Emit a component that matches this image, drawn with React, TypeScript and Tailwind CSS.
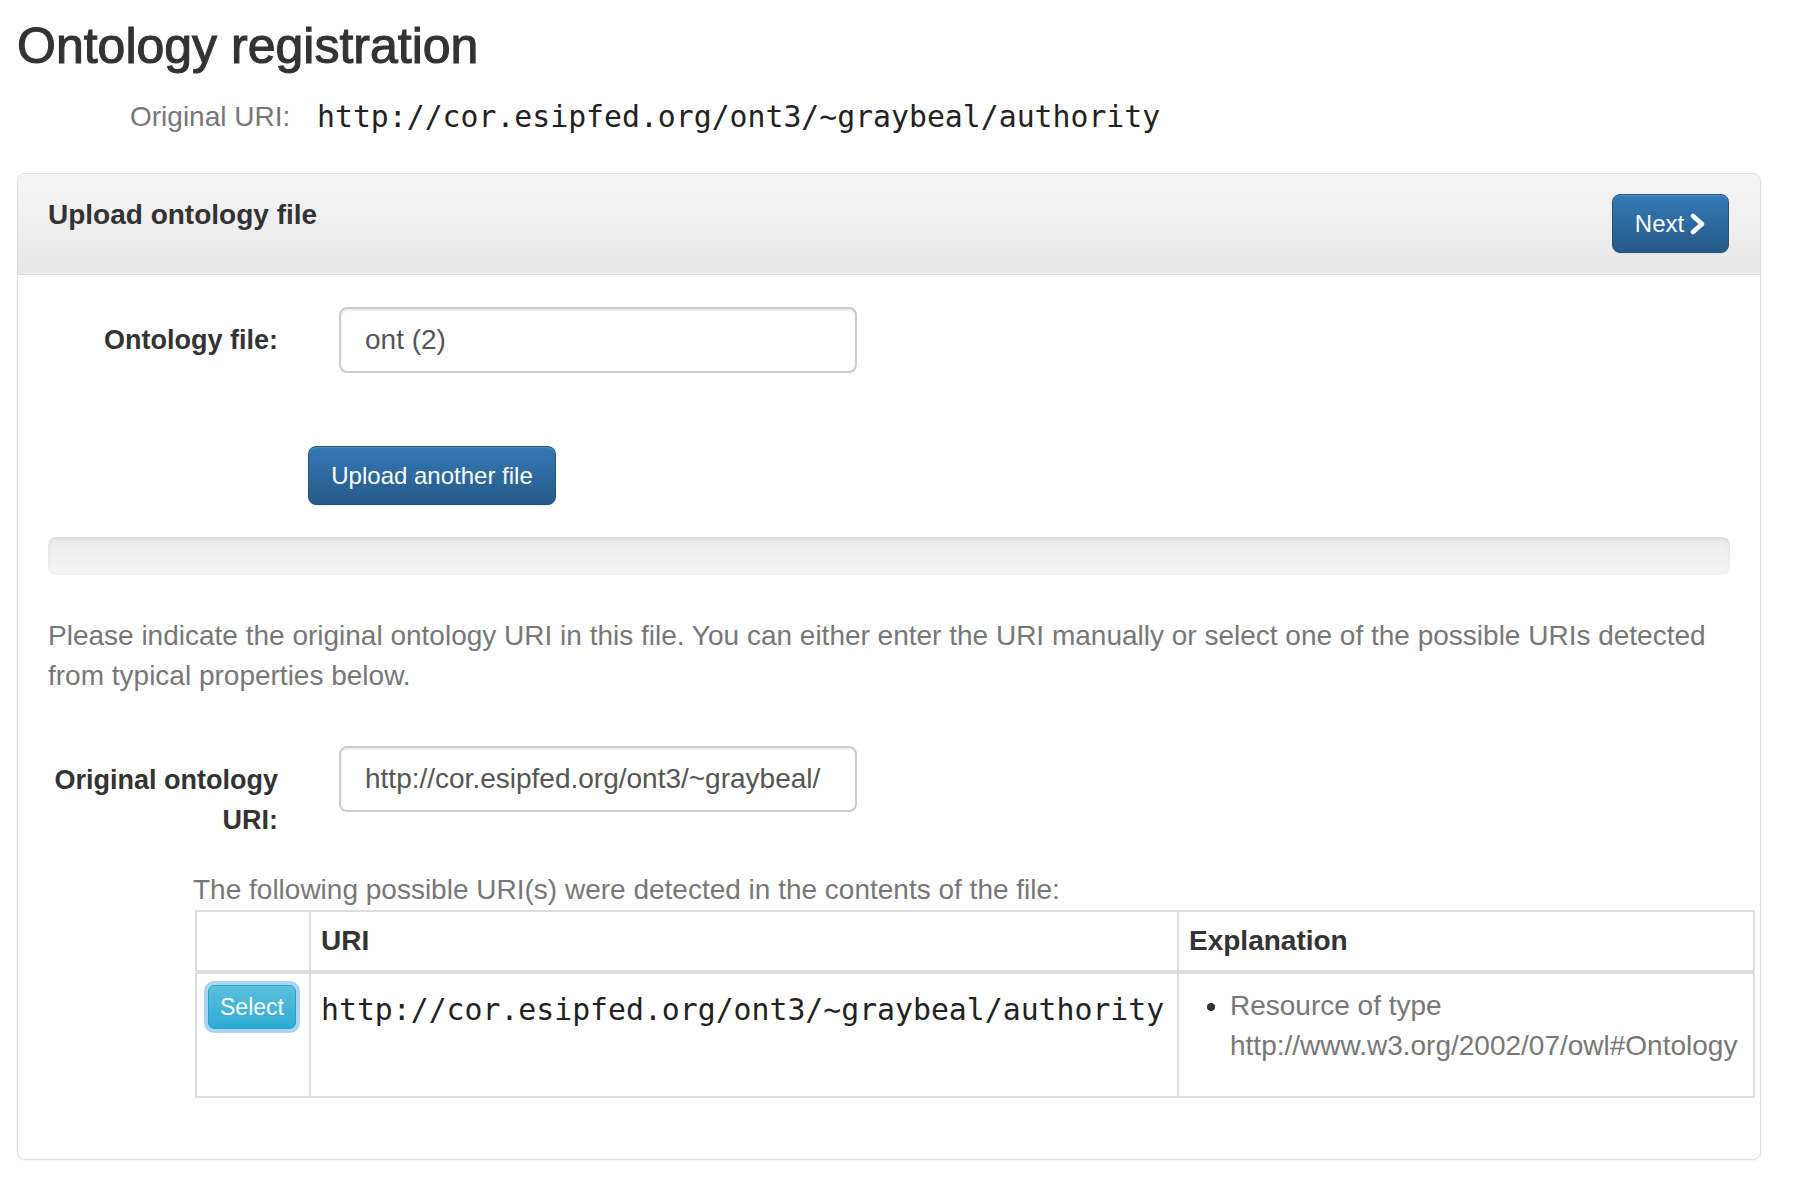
import React from "react";

export default function App() {
  return (
    <div className="w-[1794px] h-[1188px] bg-white text-[#333] font-['Liberation_Sans',Arial,sans-serif]">
      <h1 className="pl-[17px] pt-[19px] text-[50px] leading-[55px] font-normal text-[#333] [-webkit-text-stroke:1.1px_#333]">
        Ontology registration
      </h1>
      <div className="mt-[23px] flex items-center pl-[130px] h-[40px]">
        <span className="w-[187px] text-[28px] leading-[40px] text-[#777]">Original URI:</span>
        <span className="font-['DejaVu_Sans_Mono',monospace] text-[29.8px] leading-[40px] text-[#222]">
          http://cor.esipfed.org/ont3/~graybeal/authority
        </span>
      </div>

      <div className="mt-[36px] ml-[17px] w-[1744px] border border-[#ddd] rounded-[8px] shadow-[0_1px_2px_rgba(0,0,0,0.05)]">
        <div className="h-[101px] border-b border-[#ddd] rounded-t-[7px] bg-gradient-to-b from-[#f5f5f5] to-[#e8e8e8] pl-[30px] pr-[31px] flex justify-between items-start">
          <div className="pt-[21px] text-[28px] leading-[40px] font-bold text-[#333]">Upload ontology file</div>
          <button className="mt-[20px] w-[117px] h-[59px] rounded-[8px] border border-[#245580] bg-gradient-to-b from-[#337ab7] to-[#265a88] text-white text-[24px] flex items-center justify-center gap-[6px] shadow-[inset_0_1px_0_rgba(255,255,255,0.15),0_1px_1px_rgba(0,0,0,0.075)]">
            <span>Next</span>
            <svg width="16" height="22" viewBox="0 0 16 22">
              <polyline points="3,3 12,11 3,19" fill="none" stroke="white" strokeWidth="4.5" strokeLinecap="round" strokeLinejoin="round" />
            </svg>
          </button>
        </div>

        <div className="px-[30px] pt-[32px] pb-[61px]">
          <div className="flex items-start">
            <div className="w-[230px] text-right pt-[13px] text-[27px] leading-[40px] font-bold text-[#333] whitespace-nowrap">
              Ontology file:
            </div>
            <div className="ml-[61px] w-[518px] h-[66px] border-2 border-[#ccc] rounded-[8px] shadow-[inset_0_2px_2px_rgba(0,0,0,0.075)] pl-[24px] flex items-center text-[28px] text-[#555]">
              ont (2)
            </div>
          </div>

          <button className="mt-[73px] ml-[260px] w-[248px] h-[59px] rounded-[8px] border border-[#245580] bg-gradient-to-b from-[#337ab7] to-[#265a88] text-white text-[24px] flex items-center justify-center shadow-[inset_0_1px_0_rgba(255,255,255,0.15),0_1px_1px_rgba(0,0,0,0.075)]">
            Upload another file
          </button>

          <div className="mt-[32px] h-[38px] w-full rounded-[8px] bg-gradient-to-b from-[#ebebeb] to-[#f5f5f5] shadow-[inset_0_2px_4px_rgba(0,0,0,0.08)]" />

          <p className="mt-[41px] text-[28px] leading-[40px] text-[#777]">
            Please indicate the original ontology URI in this file. You can either enter the URI manually or select one of the possible URIs detected
            <br />
            from typical properties below.
          </p>

          <div className="mt-[50px] flex items-start">
            <div className="w-[230px] text-right pt-[14px] text-[27px] leading-[40px] font-bold text-[#333] whitespace-nowrap">
              Original ontology
              <br />
              URI:
            </div>
            <div className="ml-[61px] w-[518px] h-[66px] border-2 border-[#ccc] rounded-[8px] shadow-[inset_0_2px_2px_rgba(0,0,0,0.075)] pl-[24px] pr-[24px] flex items-center text-[28px] text-[#555] overflow-hidden whitespace-nowrap">
              http://cor.esipfed.org/ont3/~graybeal/
            </div>
          </div>

          <div className="mt-[30px] ml-[145px] text-[28px] leading-[40px] text-[#777]">
            The following possible URI(s) were detected in the contents of the file:
          </div>

          <table className="ml-[147px] w-[1560px] table-fixed border-collapse border-2 border-[#ddd] text-[28px]">
            <colgroup>
              <col className="w-[114px]" />
              <col className="w-[868px]" />
              <col />
            </colgroup>
            <thead>
              <tr>
                <th className="border-2 border-b-4 border-[#ddd] py-[9px] px-[10px]"></th>
                <th className="border-2 border-b-4 border-[#ddd] py-[9px] px-[10px] text-left leading-[40px] font-bold text-[#333]">
                  URI
                </th>
                <th className="border-2 border-b-4 border-[#ddd] py-[9px] px-[10px] text-left leading-[40px] font-bold text-[#333]">
                  Explanation
                </th>
              </tr>
            </thead>
            <tbody>
              <tr>
                <td className="border-2 border-[#ddd] py-[10px] px-[10px] align-top">
                  <button className="w-[88px] h-[44px] mt-[1px] ml-[1px] rounded-[6px] border border-[#28a4c9] bg-gradient-to-b from-[#5bc0de] to-[#2aabd2] text-white text-[23px] flex items-center justify-center shadow-[0_0_0_4px_rgba(102,175,233,0.55)]">
                    Select
                  </button>
                </td>
                <td className="border-2 border-[#ddd] py-[10px] px-[10px] align-top">
                  <div className="pt-[4px] font-['DejaVu_Sans_Mono',monospace] text-[29.8px] leading-[44px] text-[#222] whitespace-nowrap">
                    http://cor.esipfed.org/ont3/~graybeal/authority
                  </div>
                </td>
                <td className="border-2 border-[#ddd] py-[10px] px-[10px] align-top">
                  <ul className="list-disc pl-[41px] mt-[2px] mb-[20px] text-[#777] leading-[40px] marker:text-[#333]">
                    <li>
                      Resource of type
                      <br />
                      http://www.w3.org/2002/07/owl#Ontology
                    </li>
                  </ul>
                </td>
              </tr>
            </tbody>
          </table>
        </div>
      </div>
    </div>
  );
}
